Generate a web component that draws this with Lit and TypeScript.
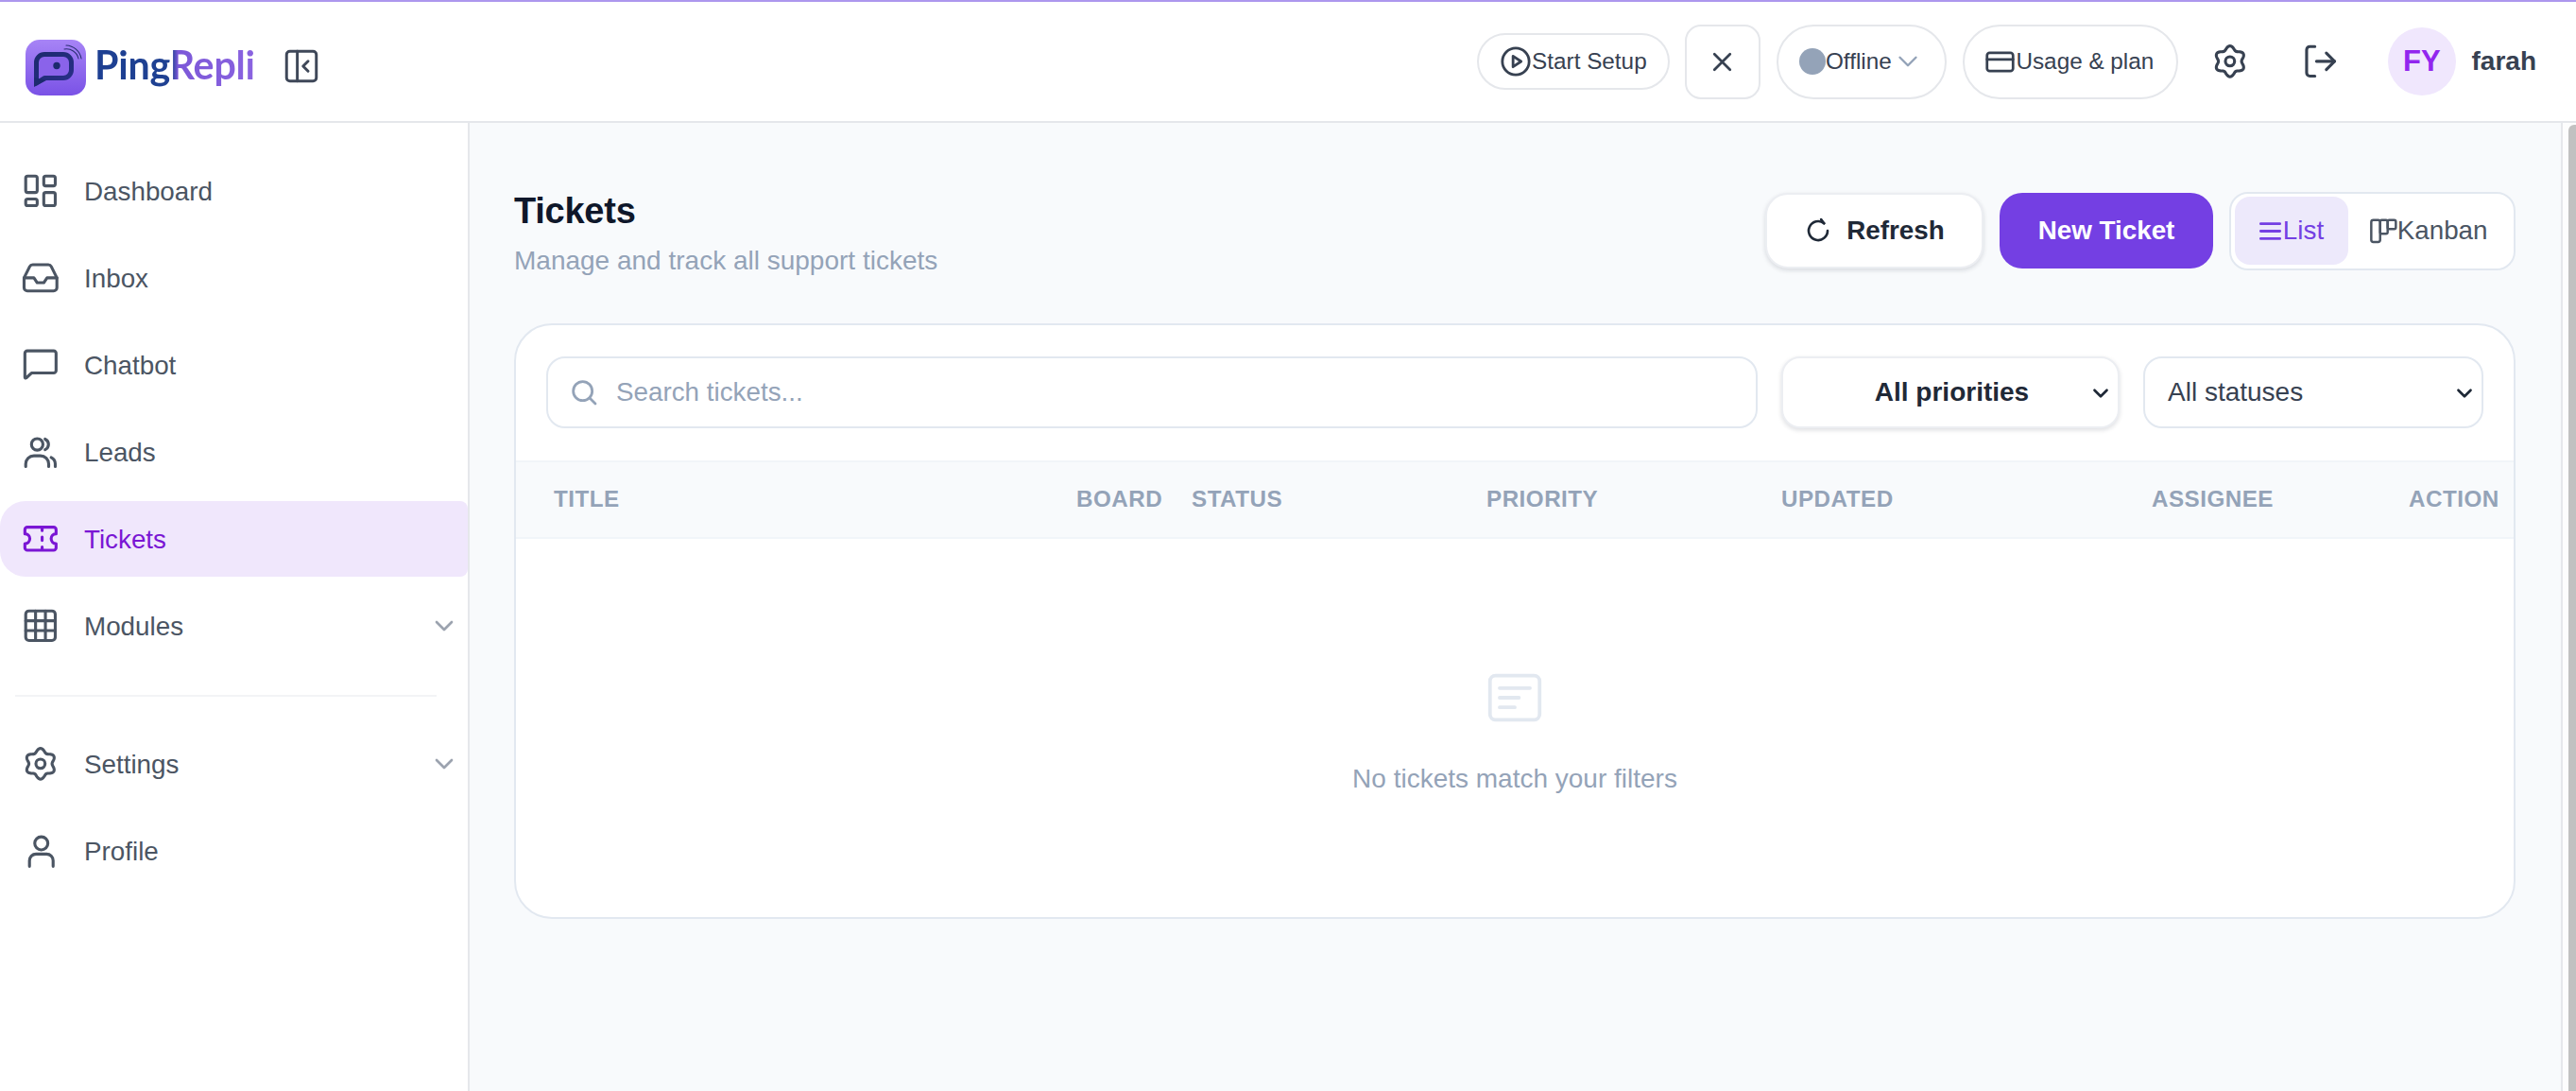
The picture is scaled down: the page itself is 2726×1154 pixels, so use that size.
import { LitElement, html, css, svg } from "lit";
import { customElement } from "lit/decorators.js";

const gearPath = (() => {
  const pts: string[] = [];
  for (let i = 0; i < 120; i++) {
    const t = (i / 120) * Math.PI * 2;
    const r = 8.2 + 1.15 * Math.cos(6 * t);
    pts.push(`${(12 + r * Math.sin(t)).toFixed(2)} ${(12 - r * Math.cos(t)).toFixed(2)}`);
  }
  return "M" + pts.join("L") + "Z";
})();

const icons: Record<string, unknown> = {
  dashboard: svg`<rect x="3" y="3" width="7" height="10" rx="1.2"/><rect x="14" y="3" width="7" height="6" rx="1.2"/><rect x="14" y="13" width="7" height="8" rx="1.2"/><rect x="3" y="17" width="7" height="4" rx="1.2"/>`,
  inbox: svg`<path d="M22 12h-6l-2 3h-4l-2-3H2"/><path d="M5.45 5.11 2 12v6a2 2 0 0 0 2 2h16a2 2 0 0 0 2-2v-6l-3.45-6.89A2 2 0 0 0 16.76 4H7.24a2 2 0 0 0-1.79 1.11z"/>`,
  chat: svg`<path d="M2.500 5a1.500 1.500 0 0 1 1.500-1.500h16A1.500 1.500 0 0 1 21.500 5v10.500a1.500 1.500 0 0 1-1.500 1.500H6.500l-3.200 3c-.3.3-.8.1-.8-.3z"/>`,
  users: svg`<circle cx="10" cy="7.500" r="3.500"/><path d="M3 21v-1.500a5 5 0 0 1 5-5h4a5 5 0 0 1 5 5V21"/><path d="M14.800 4.300a3.500 3.500 0 0 1 0 6.400"/><path d="M21 21v-1.500a4.500 4.500 0 0 0-2.500-4"/>`,
  ticket: svg`<path d="M2.500 6.500A1.500 1.500 0 0 1 4 5h16a1.500 1.500 0 0 1 1.500 1.500V9a3 3 0 0 0 0 6v2.500A1.500 1.500 0 0 1 20 19H4a1.500 1.500 0 0 1-1.500-1.500V15a3 3 0 0 0 0-6z"/><path d="M13 5.500v1.500M13 11v2M13 17v1.500"/>`,
  grid: svg`<rect x="3" y="3" width="18" height="18" rx="2"/><path d="M3 9h18M3 15h18M9 3v18M15 3v18"/>`,
  gear: svg`<path d=${gearPath}/><circle cx="12" cy="12" r="2.800"/>`,
  user: svg`<circle cx="12.500" cy="7.500" r="4"/><path d="M5.300 21.500V18a4 4 0 0 1 4-4h6.400a4 4 0 0 1 4 4v3.500"/>`,
  chevron: svg`<path d="m6 9 6 6 6-6"/>`,
  panel: svg`<rect x="3" y="3" width="18" height="18" rx="2"/><path d="M9.500 3v18"/><path d="m16 9-3 3 3 3"/>`,
  play: svg`<circle cx="12" cy="12" r="10"/><path d="M10 8l6 4-6 4z"/>`,
  x: svg`<path d="M18 6 6 18M6 6l12 12"/>`,
  card: svg`<rect x="2" y="5" width="20" height="14" rx="2"/><path d="M2 10h20"/>`,
  logout: svg`<path d="M9 3H6a2 2 0 0 0-2 2v14a2 2 0 0 0 2 2h3"/><path d="M10 12h11"/><path d="m16 7 5 5-5 5"/>`,
  refresh: svg`<path d="M20 12a8 8 0 1 1-3-6.200"/><path d="M14.500 2.500 17 5.800"/>`,
  list: svg`<path d="M3 5h18M3 12h18M3 19h18"/>`,
  kanban: svg`<rect x="3" y="4" width="6.500" height="16" rx="1.500"/><rect x="9.500" y="4" width="5.500" height="10" rx="1.200"/><rect x="15" y="4" width="6" height="6.500" rx="1.200"/>`,
  search: svg`<circle cx="11" cy="11" r="7.500"/><path d="m21 21-4.500-4.500"/>`,
  empty: svg`<rect x="3" y="4" width="18" height="16" rx="2"/><path d="M6.500 8.500h11M6.500 12h7M6.500 15.500h5.500"/>`,
};

const icon = (name: string, cls = "") =>
  html`<svg class="ic ${cls}" viewBox="0 0 24 24" fill="none" stroke="currentColor" stroke-linecap="round" stroke-linejoin="round">${icons[name]}</svg>`;

const navTop = [
  ["dashboard", "Dashboard", false, false],
  ["inbox", "Inbox", false, false],
  ["chat", "Chatbot", false, false],
  ["users", "Leads", false, false],
  ["ticket", "Tickets", true, false],
  ["grid", "Modules", false, true],
] as const;
const navBottom = [
  ["gear", "Settings", false, true],
  ["user", "Profile", false, false],
] as const;
const columns = ["Title", "Board", "Status", "Priority", "Updated", "Assignee", "Action"];

@customElement("app-root")
export class AppRoot extends LitElement {
  static styles = css`
    :host {
      display: block;
      width: 2726px;
      height: 1154px;
      overflow: hidden;
      background: #fff;
      font-family: "Liberation Sans", Arial, sans-serif;
      color: #374151;
      box-sizing: border-box;
      border-top: 2px solid #ad97ee;
    }
    * { box-sizing: border-box; }
    .ic { display: block; flex: none; width: 35px; height: 35px; stroke-width: 2; }

    .header {
      height: 128px;
      display: flex;
      align-items: center;
      border-bottom: 2px solid #e5e7eb;
      padding: 0 42px 0 27px;
      background: #fff;
    }
    .logo { display: flex; align-items: center; gap: 9px; margin-top: 12px; }
    .logo-mark { width: 64px; height: 59px; display: block; flex: none; }
    .logo-text {
      font-family: "Lato", "Liberation Sans", sans-serif;
      font-size: 41.200px;
      line-height: 48px;
      font-weight: 700;
      letter-spacing: -0.200px;
      margin-bottom: 7px;
      background: linear-gradient(90deg, #1d3f92 0%, #1f4192 48%, #7c58d8 52%, #8a63e0 100%);
      -webkit-background-clip: text;
      background-clip: text;
      color: transparent;
    }
    .collapse { margin-left: 28.500px; color: #3f4859; margin-top: 10px; }
    .collapse .ic { width: 42px; height: 42px; stroke-width: 1.700; }
    .spacer { flex: 1; }
    .tools { display: flex; align-items: center; }
    .chip {
      display: flex;
      align-items: center;
      justify-content: center;
      height: 79px;
      background: #fff;
      border: 2px solid #e5e7eb;
      border-radius: 40px;
      font-size: 24.300px;
      color: #374151;
    }
    .setup { height: 60px; width: 204px; gap: 0; }
    .setup .ic { width: 34px; height: 34px; }
    .close { width: 80px; border-radius: 17px; margin-left: 16px; }
    .close .ic { width: 33px; height: 33px; }
    .offline { width: 180px; margin-left: 17px; }
    .dot { width: 28px; height: 28px; border-radius: 50%; background: #94a3b8; flex: none; }
    .offline .ic { width: 34px; height: 34px; margin-left: 0; color: #94a3b8; stroke-width: 1.700; }
    .usage { width: 228px; gap: 0; margin-left: 17px; padding-right: 2px; }
    .usage .ic { width: 33px; height: 33px; }
    .tool-icon { color: #374151; }
    .tool-icon .ic { width: 41.700px; height: 41.700px; stroke-width: 1.800; }
    .gear { margin-left: 34.300px; }
    .logout { margin-left: 53px; }
    .avatar {
      width: 72px;
      height: 72px;
      border-radius: 50%;
      background: #f0e7fd;
      color: #9226ee;
      display: flex;
      align-items: center;
      justify-content: center;
      font-weight: 700;
      font-size: 31px;
      margin-left: 51.300px;
    }
    .name { font-weight: 700; font-size: 28px; color: #374151; margin-left: 16.700px; }

    .body { display: flex; height: 1024px; }
    .side {
      width: 497px;
      flex: none;
      background: #fff;
      border-right: 2px solid #e5e7eb;
      padding-top: 32px;
    }
    .nav-item {
      height: 80px;
      display: flex;
      align-items: center;
      gap: 25.300px;
      margin-bottom: 12px;
      padding: 0 9px 0 22px;
      font-size: 27.800px;
      color: #4b5563;
      border-radius: 27px 8px 8px 27px;
    }
    .nav-item.active { background: #f0e7fc; color: #7a16d4; }
    .nav-item .ic { width: 41.700px; height: 41.700px; stroke-width: 1.800; }
    .nav-item span { flex: 1; padding-top: 2px; }
    .nav-item .chev { width: 32px; height: 32px; color: #9ca3af; margin: 0; stroke-width: 2; }
    .sep { height: 2px; background: #f3f4f6; margin: 33px 33px 31px 16px; }

    .main {
      flex: 1;
      display: flex;
      background: #f8fafc;
      min-width: 0;
    }
    .content { flex: 1; padding: 72px 48px 0 47px; min-width: 0; }
    .page-head { display: flex; justify-content: space-between; align-items: flex-start; height: 140px; }
    h1 { margin: -1px 0 0; font-size: 38px; line-height: 44px; font-weight: 700; color: #0f172a; letter-spacing: -0.250px; }
    .sub { font-size: 28px; line-height: 32px; color: #94a3b8; margin-top: 15px; }
    .actions { display: flex; align-items: center; height: 84px; }
    .btn {
      height: 80px;
      display: flex;
      align-items: center;
      justify-content: center;
      border-radius: 24px;
      font-size: 27.800px;
      font-weight: 700;
    }
    .refresh {
      width: 231px;
      background: #fff;
      border: 2px solid #eceef2;
      color: #1f2937;
      gap: 15px;
      box-shadow: 0 2px 5px rgba(15, 23, 42, 0.14);
    }
    .refresh .ic { width: 30px; height: 30px; stroke-width: 2.100; }
    .new { width: 226px; background: #743fe3; color: #fff; margin-left: 17px; }
    .toggle {
      width: 303px;
      height: 83px;
      background: #fff;
      border: 2px solid #e2e8f0;
      border-radius: 20px;
      margin-left: 17px;
      display: flex;
      align-items: center;
      padding: 0 4px;
      font-size: 27.800px;
    }
    .seg { display: flex; align-items: center; justify-content: center; height: 72px; border-radius: 16px; color: #4b5563; }
    .seg.on { width: 120px; background: #ede9fb; color: #743fe3; padding-right: 2px; }
    .seg.off { margin-left: 20px; }
    .seg .ic { width: 27px; height: 27px; stroke-width: 2.500; }
    .seg.off .ic { width: 34.700px; height: 34.700px; stroke-width: 1.700; margin-right: -3px; }

    .card {
      width: 2118px;
      height: 630px;
      background: #fff;
      border: 2px solid #e2e8f0;
      border-radius: 40px;
      overflow: hidden;
      display: flex;
      flex-direction: column;
    }
    .filters { display: flex; height: 142.500px; padding: 33px 32px 0 32px; gap: 25px; align-items: flex-start; flex: none; }
    .search {
      flex: 1;
      height: 76px;
      border: 2px solid #e2e8f0;
      border-radius: 20px;
      display: flex;
      align-items: center;
      padding: 0 22px;
      gap: 18px;
      color: #94a3b8;
      font-size: 27.800px;
      min-width: 0;
    }
    .search .ic { width: 32px; height: 32px; stroke-width: 2.100; }
    .select {
      height: 76px;
      border: 2px solid #e2e8f0;
      border-radius: 20px;
      background: #fff;
      display: flex;
      align-items: center;
      font-size: 28px;
      color: #374151;
      position: relative;
      flex: none;
    }
    .select .arrow { position: absolute; right: 5px; top: 24px; width: 26px; height: 26px; color: #1f2937; stroke-width: 2.500; }
    .priority {
      width: 358px;
      justify-content: center;
      font-weight: 700;
      color: #1f2937;
      border-color: #eceef2;
      box-shadow: 0 2px 5px rgba(15, 23, 42, 0.14);
      padding-left: 3px;
    }
    .status { width: 360px; padding-left: 24px; }
    .thead {
      display: grid;
      grid-template-columns: 553px 122px 312px 312px 392px 272px 1fr;
      height: 83px;
      align-items: center;
      padding-left: 40px;
      background: #f8fafc;
      border-top: 2px solid #f1f5f9;
      border-bottom: 2px solid #f1f5f9;
      font-size: 24.200px;
      font-weight: 700;
      color: #94a3b8;
      letter-spacing: 0.500px;
      text-transform: uppercase;
      flex: none;
    }
    .empty {
      flex: 1;
      display: flex;
      flex-direction: column;
      align-items: center;
      color: #94a3b8;
      font-size: 28px;
      padding-top: 133px;
    }
    .empty .ic { width: 70px; height: 70px; color: #e2e8f0; stroke-width: 1.300; }
    .empty div { margin-top: 35px; }
    .scrollbar { width: 16px; flex: none; border-left: 2px solid #e5e7eb; background: #fdfdfd; position: relative; }
    .thumb { position: absolute; top: 2px; left: 6px; right: 0; bottom: 0; border-radius: 6px 0 0 0; background: #c1c1c1; }
  `;

  private nav(item: readonly [string, string, boolean, boolean]) {
    const [ic, label, active, chev] = item;
    return html`<div class="nav-item ${active ? "active" : ""}">
      ${icon(ic)}<span>${label}</span>${chev ? icon("chevron", "chev") : ""}
    </div>`;
  }

  render() {
    return html`
      <header class="header">
        <div class="logo">
          <svg class="logo-mark" viewBox="0 0 64 59">
            <defs>
              <linearGradient id="lg" x1="0" y1="0" x2="0" y2="1"><stop offset="0" stop-color="#a784f6"/><stop offset="1" stop-color="#7a52e6"/></linearGradient>
              <linearGradient id="bub" x1="0" y1="0" x2="1" y2="1"><stop offset="0" stop-color="#1c2a6e"/><stop offset="1" stop-color="#2a2f8a"/></linearGradient>
            </defs>
            <rect width="64" height="59" rx="15" fill="url(#lg)"/>
            <path d="M11.500 46V24a8.500 8.500 0 0 1 8.500-8.500h20a8.500 8.500 0 0 1 8.500 8.500v8a8.500 8.500 0 0 1-8.500 8.500H20z" fill="#8a63ea" stroke="url(#bub)" stroke-width="5" stroke-linejoin="round"/>
            <path d="M9 40v10l13-7z" fill="#1c2a6e"/>
            <circle cx="33" cy="27.500" r="3.700" fill="#1c2a6e"/>
            <path d="M41 10a13 13 0 0 1 15 10M43 6a17 17 0 0 1 16 14" fill="none" stroke="#2a2f72" stroke-width="1.100" stroke-linecap="round"/>
          </svg>
          <span class="logo-text">PingRepli</span>
        </div>
        <div class="collapse">${icon("panel")}</div>
        <div class="spacer"></div>
        <div class="tools">
          <div class="chip setup">${icon("play")}Start Setup</div>
          <div class="chip close">${icon("x")}</div>
          <div class="chip offline"><span class="dot"></span>Offline ${icon("chevron")}</div>
          <div class="chip usage">${icon("card")}Usage &amp; plan</div>
          <div class="tool-icon gear">${icon("gear")}</div>
          <div class="tool-icon logout">${icon("logout")}</div>
          <div class="avatar">FY</div>
          <div class="name">farah</div>
        </div>
      </header>
      <div class="body">
        <aside class="side">
          ${navTop.map((n) => this.nav(n))}
          <div class="sep"></div>
          ${navBottom.map((n) => this.nav(n))}
        </aside>
        <div class="main">
          <div class="content">
            <div class="page-head">
              <div>
                <h1>Tickets</h1>
                <div class="sub">Manage and track all support tickets</div>
              </div>
              <div class="actions">
                <div class="btn refresh">${icon("refresh")}Refresh</div>
                <div class="btn new">New Ticket</div>
                <div class="toggle">
                  <div class="seg on">${icon("list")}List</div>
                  <div class="seg off">${icon("kanban")}Kanban</div>
                </div>
              </div>
            </div>
            <section class="card">
              <div class="filters">
                <div class="search">${icon("search")}Search tickets...</div>
                <div class="select priority">All priorities${icon("chevron", "arrow")}</div>
                <div class="select status">All statuses${icon("chevron", "arrow")}</div>
              </div>
              <div class="thead">${columns.map((c) => html`<div>${c}</div>`)}</div>
              <div class="empty">${icon("empty")}<div>No tickets match your filters</div></div>
            </section>
          </div>
          <div class="scrollbar"><div class="thumb"></div></div>
        </div>
      </div>
    `;
  }
}
